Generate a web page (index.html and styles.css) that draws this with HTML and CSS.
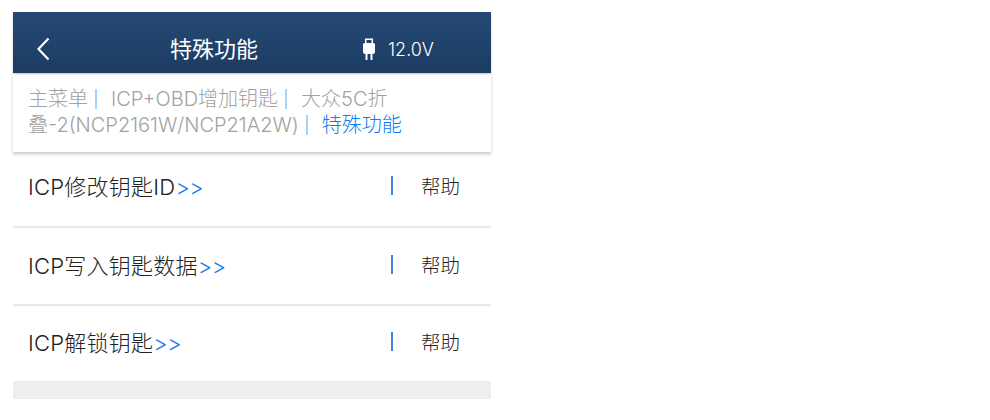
FILE: index.html
```html
<!DOCTYPE html>
<html lang="zh-CN">
<head>
<meta charset="utf-8">
<title>特殊功能</title>
<link rel="stylesheet" href="styles.css">
</head>
<body>
<div class="app">
  <header class="top">
    <svg class="back" width="16" height="24" viewBox="0 0 16 24"><path d="M13.500 1.500 3.500 12l10 10.500" fill="none" stroke="#fff" stroke-width="2.200"/></svg>
    <h1 class="title">特殊功能</h1>
    <div class="volt">
      <svg class="plug" width="14" height="22" viewBox="0 0 14 22"><path fill="#fff" fill-rule="evenodd" d="M3 0.500h8V5h0.500A1.500 1.500 0 0 1 13 6.500V14a2 2 0 0 1-2 2h-0.500v6h-2v-6h-3v6h-2v-6H3a2 2 0 0 1-2-2V6.500A1.500 1.500 0 0 1 2.500 5H3zM4.500 2V5h5V2z"/></svg>
      <span>12.0V</span>
    </div>
  </header>
  <nav class="crumbs">
    <p class="crumb-text">主菜单<i class="sep"></i>ICP+OBD增加钥匙<i class="sep"></i>大众5C折叠-2(NCP2161W/NCP21A2W)<i class="sep"></i><b class="cur">特殊功能</b></p>
  </nav>
  <ul class="list">
    <li class="row"><span class="name">ICP修改钥匙ID<em class="more">&gt;&gt;</em></span><span class="help">帮助</span></li>
    <li class="row"><span class="name">ICP写入钥匙数据<em class="more">&gt;&gt;</em></span><span class="help">帮助</span></li>
    <li class="row"><span class="name">ICP解锁钥匙<em class="more">&gt;&gt;</em></span><span class="help">帮助</span></li>
  </ul>
  <div class="foot"></div>
</div>
</body>
</html>
```
FILE: styles.css
```css
* { box-sizing: border-box; }
html, body { margin: 0; background: #fff; }
body { padding: 12px 0 0 13px; font-family: "Inter", "Noto Sans CJK SC", sans-serif; font-weight: 300; height: 420px; overflow: hidden; }
.app { width: 478px; }
.top {
  height: 61px; display: flex; align-items: center; padding: 13px 0 0 22px; color: #fff;
  background: linear-gradient(#254a75, #1c3b62);
  position: relative; z-index: 2; box-shadow: 0 1px 2px rgba(0,0,0,.25);
}
.back { flex: none; width: 16px; }
.title { margin: -4px 0 0 119px; width: 100px; font-size: 22px; font-weight: 400; line-height: 26px; white-space: nowrap; font-family: "Noto Sans CJK SC", sans-serif; }
.volt { display: flex; align-items: center; margin-left: 92px; font-size: 18px; }
.plug { margin-right: 12px; }
.crumbs {
  height: 79px; padding: 13px 60px 0 15px; background: #fff;
  box-shadow: 0 2px 3px rgba(0,0,0,.22); position: relative; z-index: 1;
}
.crumb-text { margin: 0; font-size: 20px; line-height: 26px; color: #a2a2a2; font-family: "Inter", "Noto Sans CJK SC", sans-serif; font-weight: 300; }
.sep { display: inline-block; width: 2px; height: 20px; background: #a9d3fb; margin: 0 14px 0 7px; vertical-align: -3px; }
.cur { font-weight: 300; color: #0a7bf0; }
.list { list-style: none; margin: 0; padding: 0; }
.row {
  height: 78px; display: flex; align-items: center; justify-content: space-between;
  padding: 0 31px 4px 15px; border-bottom: 2px solid #e9e9e9; color: #222; font-size: 22px;
}
.row:first-child { height: 76px; padding-bottom: 8px; }
.row:last-child { border-bottom: 0; height: 75px; padding-bottom: 5px; }
.name { font-family: "Inter", "Noto Sans CJK SC", sans-serif; font-weight: 300; letter-spacing: .25px; }
.more { font-style: normal; color: #0a7bf0; letter-spacing: -.5px; }
.help { position: relative; padding-left: 30px; line-height: 19px; font-size: 19.500px; font-family: "Noto Sans CJK SC", sans-serif; font-weight: 300; }
.help::before { content: ""; position: absolute; left: 0; top: 0; width: 2px; height: 19px; background: #3d86d8; }
.foot { height: 18px; background: #eeeeee; }
```
